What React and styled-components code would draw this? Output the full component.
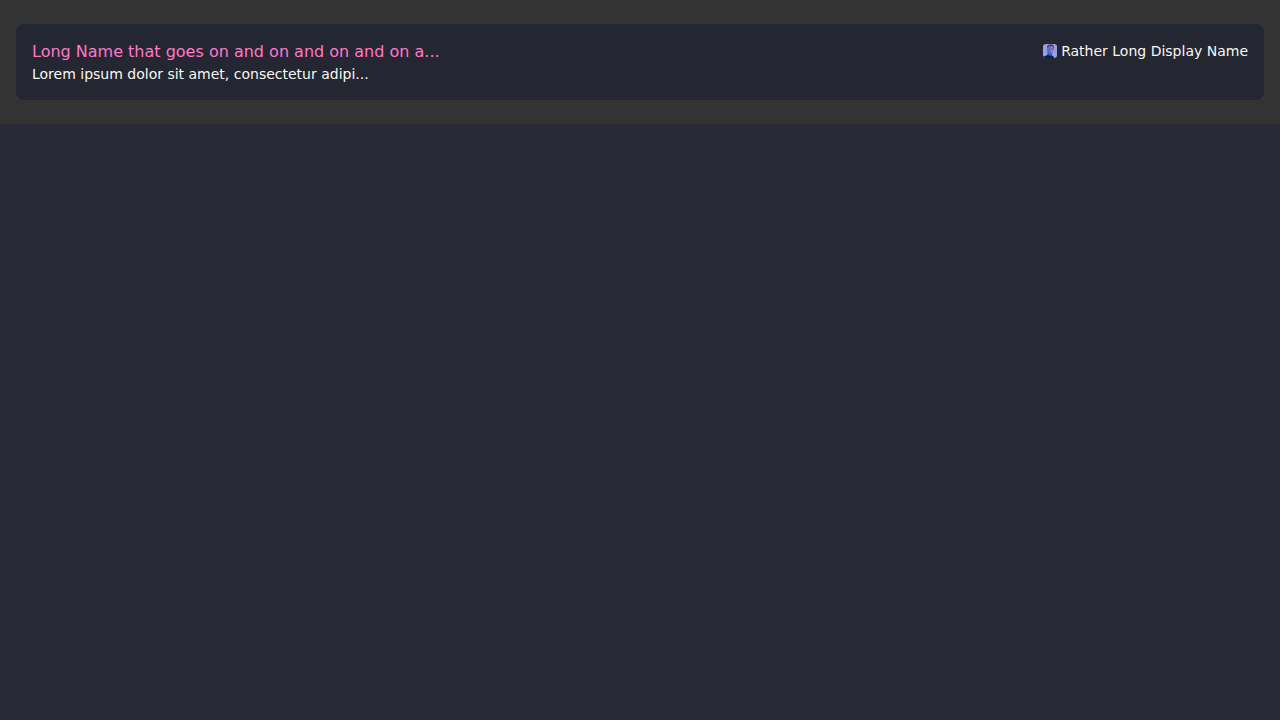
import React from "react";
import styled, { createGlobalStyle } from "styled-components";

const GlobalStyle = createGlobalStyle`
  *, *::before, *::after { box-sizing: border-box; }
  body {
    margin: 0;
    background: #282a36;
    color: #f8f8f2;
    font-family: "DejaVu Sans", sans-serif;
    font-size: 16px;
    line-height: 24px;
  }
`;

const Section = styled.main`
  padding: 24px 16px;
  background: #333333;
`;

const Card = styled.article`
  display: flex;
  align-items: flex-start;
  justify-content: space-between;
  gap: 16px;
  padding: 16px;
  border-radius: 8px;
  background: #242631;
`;

const Summary = styled.div`
  min-width: 0;
`;

const Title = styled.h2`
  margin: 0;
  color: #ff79c6;
  font-size: 16px;
  font-weight: 400;
  line-height: 24px;
`;

const Description = styled.p`
  margin: 0;
  font-size: 14px;
  line-height: 20px;
`;

const Author = styled.div`
  display: flex;
  flex-shrink: 0;
  align-items: center;
  gap: 4px;
  font-size: 14px;
  line-height: 22px;
`;

const AvatarArt = styled.svg`
  display: block;
  width: 14px;
  height: 14px;
  border-radius: 3px;
`;

function Avatar() {
  return (
    <AvatarArt viewBox="0 0 14 14" aria-hidden="true">
      <defs>
        <linearGradient id="backdrop" x1="0" y1="0" x2="0" y2="1">
          <stop offset="0" stopColor="#a596dc" />
          <stop offset="1" stopColor="#93a2f4" />
        </linearGradient>
      </defs>
      <rect width="14" height="14" fill="url(#backdrop)" />
      <path d="M0 14V12.6L3.5 11.4L5 10H8L9.5 12L11 13V14Z" fill="#111c4e" />
      <path d="M4.5 7H9V11L7.6 12L4.5 10.5Z" fill="#315fb4" />
      <path d="M4 3Q4.5 1.5 7 1.5Q10.3 1.5 10.4 4V6.5Q10 9.6 7.8 10Q5.3 9.5 4 7Z" fill="#4275cc" />
      <path d="M7.5 2.5H10V6.5Q9.6 8.6 8 9.5Z" fill="#b8829b" />
      <path d="M4 4Q3.5 1 6.6 .4Q10.8 0 11 3.4L10.6 5.5L9.8 2.6L7.3 2L5 2.8Z" fill="#45405f" />
      <path d="M8 4.6H9.8V5.4H8Z" fill="#5a4874" />
    </AvatarArt>
  );
}

export default function App() {
  return (
    <>
      <GlobalStyle />
      <Section>
        <Card>
          <Summary>
            <Title>Long Name that goes on and on and on and on a...</Title>
            <Description>Lorem ipsum dolor sit amet, consectetur adipi...</Description>
          </Summary>
          <Author>
            <Avatar />
            <span>Rather Long Display Name</span>
          </Author>
        </Card>
      </Section>
    </>
  );
}
